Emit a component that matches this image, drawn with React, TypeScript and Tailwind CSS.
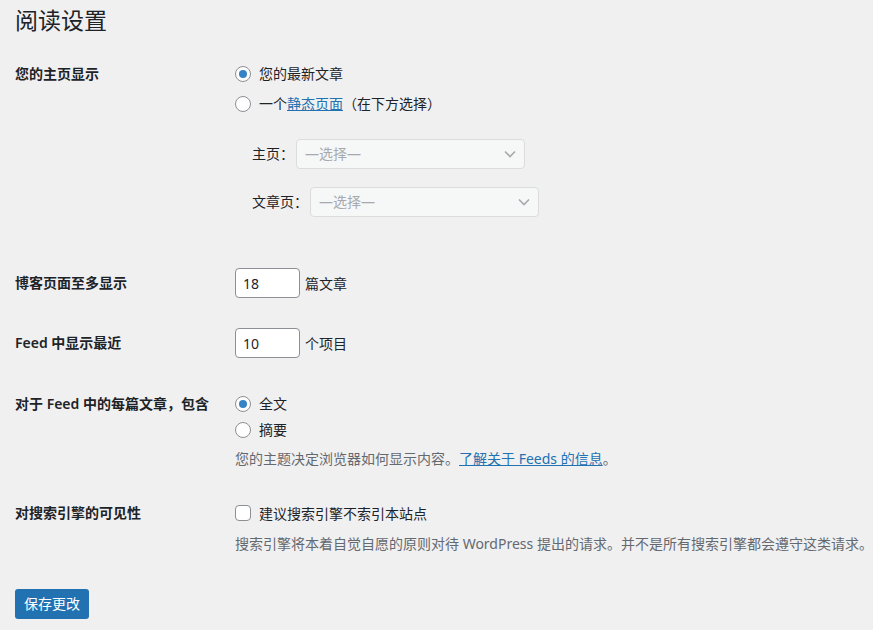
import type { ReactNode } from "react";

function Radio({ checked }: { checked?: boolean }) {
  return (
    <span className="flex h-4 w-4 shrink-0 items-center justify-center rounded-full border border-[#8c8f94] bg-white">
      {checked && <span className="h-2 w-2 rounded-full bg-[#3582c4]" />}
    </span>
  );
}

function Option({ checked, children }: { checked?: boolean; children: ReactNode }) {
  return (
    <label className="flex h-5 items-center gap-2 leading-5">
      <Radio checked={checked} />
      <span>{children}</span>
    </label>
  );
}

function Select({ label }: { label: string }) {
  return (
    <div className="flex items-center pl-[17px]">
      <span className="leading-5">{label}</span>
      <div className="ml-[2px] flex h-[30px] w-[229px] items-center justify-between rounded-[4px] border border-[#dcdcde] bg-[#f6f7f7] pl-2 pr-[8px] text-[#a7aaad]">
        <span className="leading-5">—选择—</span>
        <svg width="12" height="8" viewBox="0 0 12 8" fill="none">
          <path d="M1 1.5l5 5 5-5" stroke="#a7aaad" strokeWidth="1.6" />
        </svg>
      </div>
    </div>
  );
}

function Row({ label, className, children }: { label: string; className: string; children: ReactNode }) {
  return (
    <div className={"flex " + className}>
      <div className="w-[220px] shrink-0 font-semibold leading-5">{label}</div>
      <div className="flex flex-col">{children}</div>
    </div>
  );
}

export default function App() {
  return (
    <div className="min-h-screen bg-[#f0f0f1] pl-[15px] text-[14px] text-[#1d2327] font-['Noto_Sans','Noto_Sans_CJK_SC',sans-serif]">
      <h1 className="pt-[6px] text-[23px] font-normal leading-[29px]">阅读设置</h1>

      <Row label="您的主页显示" className="mt-[29px]">
        <Option checked>您的最新文章</Option>
        <div className="mt-[10px]">
          <Option>
            一个<a className="text-[#2271b1] underline">静态页面</a>（在下方选择）
          </Option>
        </div>
        <div className="mt-[25px]">
          <Select label="主页：" />
        </div>
        <div className="mt-[18px]">
          <Select label="文章页：" />
        </div>
      </Row>

      <Row label="博客页面至多显示" className="mt-[51px] items-center">
        <div className="flex items-center gap-[5px]">
          <div className="flex h-[30px] w-[65px] items-center rounded-[4px] border border-[#8c8f94] bg-white pl-[7px]">18</div>
          <span>篇文章</span>
        </div>
      </Row>

      <Row label="Feed 中显示最近" className="mt-[30px] items-center">
        <div className="flex items-center gap-[5px]">
          <div className="flex h-[30px] w-[65px] items-center rounded-[4px] border border-[#8c8f94] bg-white pl-[7px]">10</div>
          <span>个项目</span>
        </div>
      </Row>

      <Row label="对于 Feed 中的每篇文章，包含" className="mt-[36px]">
        <Option checked>全文</Option>
        <div className="mt-[6px]">
          <Option>摘要</Option>
        </div>
        <p className="mt-[9px] leading-5 text-[#646970]">
          您的主题决定浏览器如何显示内容。<a className="text-[#2271b1] underline">了解关于 Feeds 的信息</a>。
        </p>
      </Row>

      <Row label="对搜索引擎的可见性" className="mt-[34px]">
        <label className="flex h-5 items-center gap-2">
          <span className="h-4 w-4 rounded-[4px] border border-[#8c8f94] bg-white" />
          <span>建议搜索引擎不索引本站点</span>
        </label>
        <p className="mt-[11px] whitespace-nowrap leading-5 text-[#646970]">
          搜索引擎将本着自觉自愿的原则对待 WordPress 提出的请求。并不是所有搜索引擎都会遵守这类请求。
        </p>
      </Row>

      <button className="mt-[35px] h-[30px] w-[74px] rounded-[3px] bg-[#2271b1] leading-5 text-white">保存更改</button>
    </div>
  );
}
